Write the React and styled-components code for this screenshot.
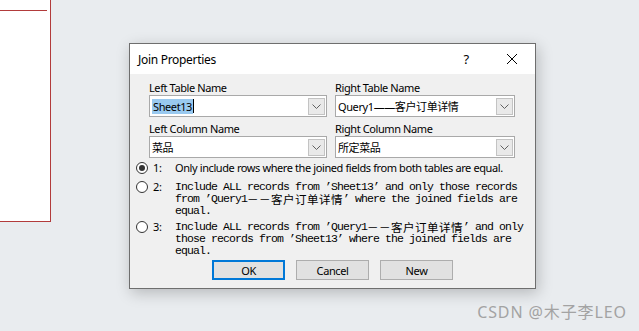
import React from "react";
import styled, { createGlobalStyle } from "styled-components";

const Global = createGlobalStyle`
  html, body { margin: 0; padding: 0; }
  body { background: #e9ecef; font-family: "Noto Sans", "Noto Sans CJK SC", sans-serif; }
`;

const Desktop = styled.div`
  position: relative;
  width: 639px;
  height: 331px;
  overflow: hidden;
  background: #e9ecef;
`;

const SidePanel = styled.div`
  position: absolute;
  left: 0;
  top: 0;
  width: 50px;
  height: 221px;
  background: #fff;
  border-right: 1px solid #b23b3b;
  border-bottom: 1px solid #b23b3b;
  display: flex;
  flex-direction: column;
`;

const PanelRule = styled.div`
  margin-top: 10px;
  width: 47px;
  height: 1px;
  background: #b23b3b;
`;

const Dialog = styled.div`
  position: absolute;
  left: 129px;
  top: 43px;
  width: 405px;
  height: 244px;
  border: 1px solid #6e6e6e;
  background: #f0f0f0;
  box-shadow: 2px 4px 14px rgba(0, 0, 0, 0.22);
  display: flex;
  flex-direction: column;
  font-family: "Noto Sans", "Noto Sans CJK SC", sans-serif;
  font-size: 11px;
  letter-spacing: -0.4px;
  color: #000;
`;

const TitleBar = styled.div`
  height: 30px;
  background: #fff;
  display: flex;
  align-items: center;
  padding-left: 8px;
`;

const Title = styled.div`
  flex: 1;
  font-size: 12px;
  letter-spacing: -0.3px;
`;

const CaptionButton = styled.div`
  width: 46px;
  height: 30px;
  display: flex;
  align-items: center;
  justify-content: center;
  font-size: 13px;
`;

const Body = styled.div`
  flex: 1;
  display: flex;
  flex-direction: column;
  padding: 6px 0 8px 0;
`;

const Fields = styled.div`
  display: grid;
  grid-template-columns: 178px 180px;
  column-gap: 8px;
  padding-left: 19px;
`;

const Field = styled.div`
  display: flex;
  flex-direction: column;
  margin-top: ${(p) => (p.$second ? "4px" : "0")};
`;

const Label = styled.div`
  height: 15px;
  line-height: 15px;
  font-size: 11px;
`;

const Combo = styled.div`
  box-sizing: border-box;
  height: 22px;
  border: 1px solid #a9a9a9;
  background: #fff;
  display: flex;
  align-items: center;
  padding: 0 1px 0 2px;
`;

const ComboText = styled.div`
  flex: 1;
  font-size: 11px;
  white-space: nowrap;
  overflow: hidden;
  display: flex;
  align-items: center;
`;

const Selected = styled.span`
  background: #99c9ef;
  padding: 0 1px;
  line-height: 15px;
`;

const Caret = styled.span`
  display: inline-block;
  width: 1px;
  height: 14px;
  background: #000;
`;

const DropButton = styled.div`
  box-sizing: border-box;
  width: 17px;
  height: 17px;
  border: 1px solid #c3c3c3;
  background: #e9e9e9;
  display: flex;
  align-items: center;
  justify-content: center;
`;

const Options = styled.div`
  display: flex;
  flex-direction: column;
  padding-left: 6px;
  margin-top: 3px;
`;

const OptionRow = styled.div`
  display: flex;
  align-items: flex-start;
  margin-top: ${(p) => p.$gap || 0}px;
`;

const Radio = styled.div`
  box-sizing: border-box;
  width: 12px;
  height: 12px;
  border-radius: 50%;
  border: 1px solid #333;
  background: #fff;
  margin-top: ${(p) => p.$offset}px;
  display: flex;
  align-items: center;
  justify-content: center;
  &::after {
    content: "";
    display: ${(p) => (p.$checked ? "block" : "none")};
    width: 6px;
    height: 6px;
    border-radius: 50%;
    background: #333;
  }
`;

const Key = styled.div`
  width: 22px;
  margin-left: 5px;
  font-size: 11px;
  line-height: ${(p) => p.$lh}px;
`;

const SansText = styled.div`
  font-size: 11px;
  line-height: 14px;
  white-space: nowrap;
`;

const MonoText = styled.div`
  font-family: "Liberation Mono", "Noto Sans CJK SC", monospace;
  font-size: 11.5px;
  letter-spacing: -0.9px;
  line-height: 12px;
  height: 36px;
  white-space: pre;
`;

const Wide = styled.span`
  font-family: "Noto Sans CJK SC", sans-serif;
  font-size: 11.5px;
  letter-spacing: 0.5px;
  line-height: 12px;
  vertical-align: top;
`;

const Buttons = styled.div`
  margin-top: auto;
  display: flex;
  justify-content: center;
  gap: 11px;
`;

const Button = styled.div`
  box-sizing: border-box;
  width: 73px;
  height: 20px;
  background: #e1e1e1;
  border: ${(p) => (p.$default ? "2px solid #0078d7" : "1px solid #adadad")};
  display: flex;
  align-items: center;
  justify-content: center;
  font-size: 11px;
`;

const Watermark = styled.div`
  position: absolute;
  right: 12px;
  bottom: 8px;
  font-family: "Noto Sans", "Noto Sans CJK SC", sans-serif;
  font-size: 16px;
  letter-spacing: 0.9px;
  color: #a3a3a3;
`;

const Chevron = () => (
  <svg width="9" height="5" viewBox="0 0 9 5">
    <path d="M0.5 0.5 L4.5 4.5 L8.5 0.5" fill="none" stroke="#606060" strokeWidth="1" />
  </svg>
);

const CloseIcon = () => (
  <svg width="10" height="10" viewBox="0 0 10 10">
    <path d="M0 0 L10 10 M10 0 L0 10" stroke="#000" strokeWidth="1" />
  </svg>
);

const ComboBox = ({ children }) => (
  <Combo>
    <ComboText>{children}</ComboText>
    <DropButton>
      <Chevron />
    </DropButton>
  </Combo>
);

export default function App() {
  return (
    <Desktop>
      <Global />
      <SidePanel>
        <PanelRule />
      </SidePanel>
      <Dialog>
        <TitleBar>
          <Title>Join Properties</Title>
          <CaptionButton>?</CaptionButton>
          <CaptionButton>
            <CloseIcon />
          </CaptionButton>
        </TitleBar>
        <Body>
          <Fields>
            <Field>
              <Label>Left Table Name</Label>
              <ComboBox>
                <Selected>Sheet13</Selected>
                <Caret />
              </ComboBox>
            </Field>
            <Field>
              <Label>Right Table Name</Label>
              <ComboBox>Query1——客户订单详情</ComboBox>
            </Field>
            <Field $second>
              <Label>Left Column Name</Label>
              <ComboBox>菜品</ComboBox>
            </Field>
            <Field $second>
              <Label>Right Column Name</Label>
              <ComboBox>所定菜品</ComboBox>
            </Field>
          </Fields>
          <Options>
            <OptionRow>
              <Radio $checked $offset={1} />
              <Key $lh={14}>1:</Key>
              <SansText>Only include rows where the joined fields from both tables are equal.</SansText>
            </OptionRow>
            <OptionRow $gap={6}>
              <Radio $offset={0} />
              <Key $lh={12}>2:</Key>
              <MonoText>
                {"Include ALL records from ’Sheet13’ and only those records\nfrom ’Query1"}
                <Wide>－－客户订单详情</Wide>
                {"’ where the joined fields are\nequal."}
              </MonoText>
            </OptionRow>
            <OptionRow $gap={4}>
              <Radio $offset={0} />
              <Key $lh={12}>3:</Key>
              <MonoText>
                {"Include ALL records from ’Query1"}
                <Wide>－－客户订单详情</Wide>
                {"’ and only\nthose records from ’Sheet13’ where the joined fields are\nequal."}
              </MonoText>
            </OptionRow>
          </Options>
          <Buttons>
            <Button $default>OK</Button>
            <Button>Cancel</Button>
            <Button>New</Button>
          </Buttons>
        </Body>
      </Dialog>
      <Watermark>CSDN @木子李LEO</Watermark>
    </Desktop>
  );
}
